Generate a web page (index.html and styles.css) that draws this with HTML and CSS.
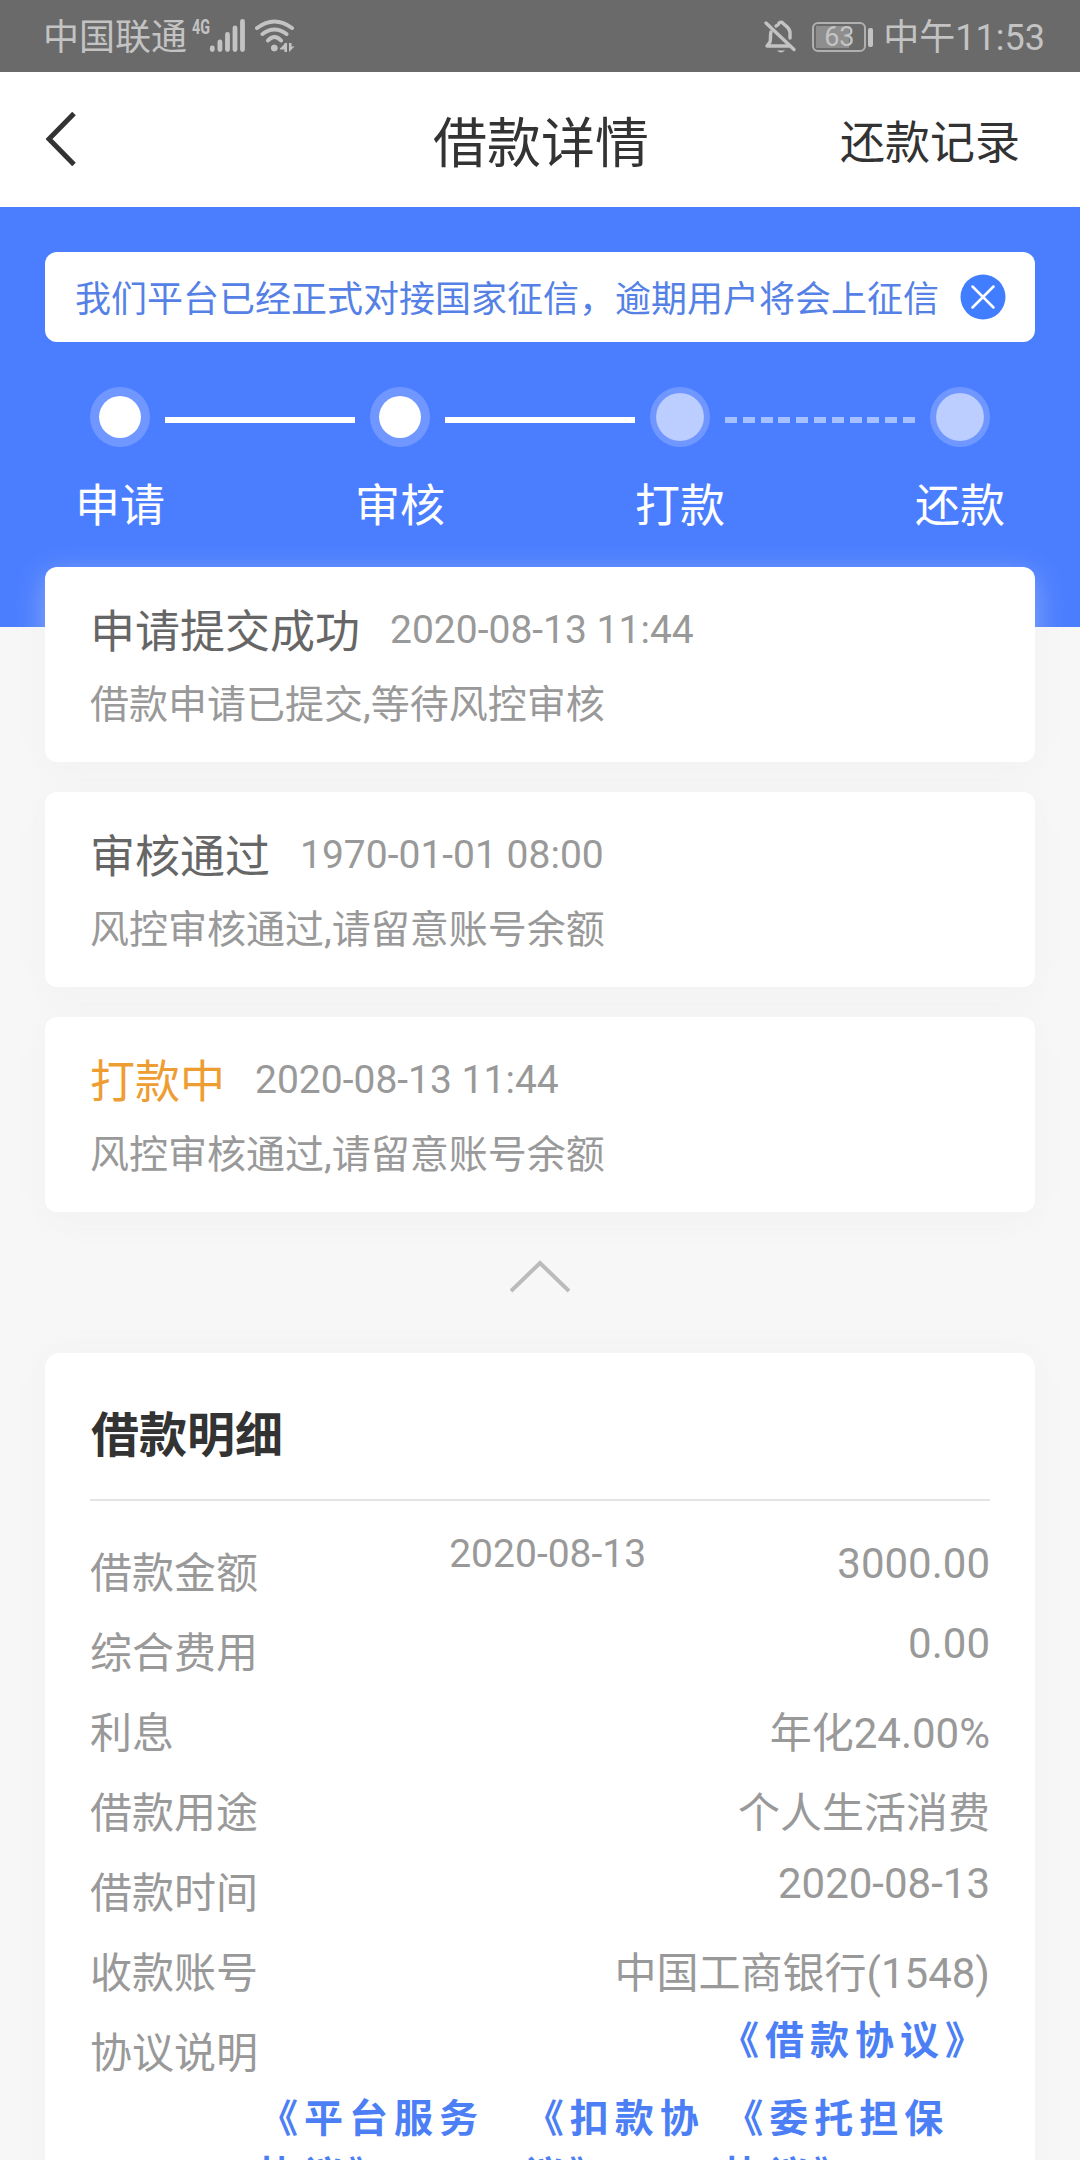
FILE: index.html
```html
<!DOCTYPE html>
<html lang="zh-CN">
<head>
    <meta charset="UTF-8">
    <meta name="viewport" content="width=device-width, initial-scale=1.0">
    <title>借款详情</title>
    <link rel="stylesheet" href="styles.css">
</head>
<body>
    <div class="status-bar">
        <span class="carrier">中国联通</span>
        <svg class="signal" width="106" height="40" viewBox="0 0 106 40">
            <text x="2" y="18" font-size="21" font-weight="700" textLength="18" lengthAdjust="spacingAndGlyphs">4G</text>
            <g stroke-width="4.8" stroke-linecap="round">
                <path d="M22.3 32v1.500M29.9 26v7.500M37.500 18.500v15M45 12v21.500M52.500 5.500v28"/>
            </g>
            <g fill="none" stroke-width="4" stroke-linecap="round">
                <path d="M67 12Q84.500 -1 102 12M72.500 18Q84.500 9 96.500 18M78 24.500Q84.500 17.500 91 24.500"/>
            </g>
            <circle cx="84.300" cy="32" r="3"/>
            <path d="M90 32.500l4.500-4.500v-1h2.500v9h-2.500v-2.500h-4.500zM99 27h2.500v3.500h3L99 36z" stroke="none"/>
        </svg>
        <div class="status-right">
            <svg class="bell" width="34" height="38" viewBox="0 0 34 38">
                <g fill="none" stroke-width="3.400" stroke-linecap="round" stroke-linejoin="round">
                    <path d="M3 6l28 26.500"/>
                    <path d="M8 15c-1 3 0 7-1 10l-3 4h22"/>
                    <path d="M13 9c2-1 3-1 3-3q2-1.500 4 0c0 2 6 3 7 9v6"/>
                </g>
                <path d="M14 33.500h8q-4 4-8 0z" stroke="none"/>
            </svg>
            <div class="battery"><span>63</span></div>
            <span class="time">中午11:53</span>
        </div>
    </div>

    <div class="nav">
        <a class="back" href="#">
            <svg width="30" height="54" viewBox="0 0 30 54"><path d="M28 1.500L3 27l25 25.500"/></svg>
        </a>
        <h1>借款详情</h1>
        <a class="record" href="#">还款记录</a>
    </div>

    <div class="banner">
        <div class="notice">
            <span>我们平台已经正式对接国家征信，逾期用户将会上征信</span>
            <svg width="46" height="46" viewBox="0 0 46 46">
                <circle cx="23" cy="23" r="22.500"/>
                <path d="M12.500 12.500l21 21M33.500 12.500l-21 21"/>
            </svg>
        </div>
        <div class="steps">
            <div class="step"><i class="dot"></i><span>申请</span></div>
            <div class="line"></div>
            <div class="step"><i class="dot"></i><span>审核</span></div>
            <div class="line"></div>
            <div class="step"><i class="dot wait"></i><span>打款</span></div>
            <div class="line dashed"></div>
            <div class="step"><i class="dot wait"></i><span>还款</span></div>
        </div>
    </div>

    <div class="records">
        <div class="record-card">
            <div class="record-title">申请提交成功<span class="date">2020-08-13 11:44</span></div>
            <div class="record-desc">借款申请已提交,等待风控审核</div>
        </div>
        <div class="record-card">
            <div class="record-title">审核通过<span class="date">1970-01-01 08:00</span></div>
            <div class="record-desc">风控审核通过,请留意账号余额</div>
        </div>
        <div class="record-card active">
            <div class="record-title">打款中<span class="date">2020-08-13 11:44</span></div>
            <div class="record-desc">风控审核通过,请留意账号余额</div>
        </div>
    </div>

    <div class="fold">
        <svg width="60" height="34" viewBox="0 0 60 34"><path d="M1 32L30 4l29 28"/></svg>
    </div>

    <div class="detail">
        <h2>借款明细</h2>
        <div class="row"><span>借款金额</span><span class="mid">2020-08-13</span><span class="num">3000.00</span></div>
        <div class="row"><span>综合费用</span><span class="num">0.00</span></div>
        <div class="row"><span>利息</span><span>年化24.00%</span></div>
        <div class="row"><span>借款用途</span><span>个人生活消费</span></div>
        <div class="row"><span>借款时间</span><span class="num">2020-08-13</span></div>
        <div class="row"><span>收款账号</span><span>中国工商银行(1548)</span></div>
        <div class="row agreement">
            <span>协议说明</span>
            <div class="links">
                <a href="#">《借款协议》</a>
                <div class="links-more">
                    <a href="#">《平台服务协议》</a>
                    <a href="#">《扣款协议》</a>
                    <a href="#">《委托担保协议》</a>
                </div>
            </div>
        </div>
    </div>
</body>
</html>
```
FILE: styles.css
```css
:root {
    --primary-color: #4b7eff;
    --status-color: #c3c3c3;
    --text-color: #333;
    --gray: #999;
}
* {
    box-sizing: border-box;
}
body {
    margin: 0;
    height: 2160px;
    overflow: hidden;
    font-family: Roboto, "Noto Sans CJK SC", sans-serif;
    background-color: #f7f7f7;
    color: var(--text-color);
    text-spacing-trim: space-all;
}
a {
    color: inherit;
    text-decoration: none;
}

/* status bar */
.status-bar {
    display: flex;
    align-items: center;
    height: 72px;
    padding: 0 35px 0 43px;
    background-color: #6a6a6a;
    color: var(--status-color);
    font-size: 36px;
    line-height: 72px;
}
.carrier, .time {
    padding-top: 4px;
}
.signal {
    margin-left: 3px;
    fill: var(--status-color);
    stroke: var(--status-color);
}
.signal text {
    stroke: none;
}
.status-right {
    display: flex;
    align-items: center;
    margin-left: auto;
}
.bell {
    fill: var(--status-color);
    stroke: var(--status-color);
}
.battery {
    position: relative;
    width: 54px;
    height: 30px;
    margin: 1px 17px 0 15px;
    border: 2px solid #b0b0b0;
    border-radius: 6px;
    background: linear-gradient(#8e8e8e, #8e8e8e) 2px 2px / 33px 22px no-repeat;
    font-size: 27px;
    line-height: 27px;
    text-align: center;
}
.battery::after {
    content: "";
    position: absolute;
    top: 4px;
    right: -9px;
    width: 5px;
    height: 19px;
    border-radius: 2px;
    background-color: var(--status-color);
}

/* nav */
.nav {
    display: grid;
    grid-template-columns: 1fr auto 1fr;
    align-items: center;
    height: 135px;
    padding: 0 60px 0 45px;
    background-color: #fff;
    line-height: 60px;
}
.back svg {
    display: block;
    margin: 0 0 1px 1px;
    fill: none;
    stroke: #333;
    stroke-width: 5;
}
.nav h1 {
    margin: 10px 0 0 17px;
    font-size: 54px;
    font-weight: 400;
}
.record {
    margin-top: 8px;
    font-size: 45px;
    text-align: right;
}

/* banner */
.banner {
    height: 420px;
    padding: 45px 45px 0;
    background-color: var(--primary-color);
}
.notice {
    display: flex;
    align-items: center;
    justify-content: space-between;
    height: 90px;
    padding: 0 29px 0 30px;
    border-radius: 12px;
    background-color: #fff;
    color: #5581e6;
    font-size: 36px;
    white-space: nowrap;
}
.notice svg {
    fill: #417dff;
    stroke: #fff;
}
.notice circle {
    stroke: none;
}
.notice path {
    stroke-width: 2.500;
    stroke-linecap: round;
}
.notice span {
    padding-bottom: 2px;
}
.steps {
    display: flex;
    align-items: flex-start;
    justify-content: space-between;
    padding: 45px 30px 0;
}
.step {
    display: flex;
    flex-direction: column;
    align-items: center;
    width: 90px;
    color: #fff;
    font-size: 45px;
    line-height: 60px;
}
.step span {
    margin-top: 30px;
}
.dot {
    width: 60px;
    height: 60px;
    border: 9px solid rgba(255, 255, 255, 0.2);
    border-radius: 50%;
    background-color: #fff;
    background-clip: padding-box;
}
.dot.wait {
    border-width: 6px;
    background-color: #bccdff;
}
.line {
    width: 190px;
    height: 6px;
    margin-top: 30px;
    background-color: #fff;
}
.line.dashed {
    background: repeating-linear-gradient(90deg, #a7c0ff 0 12px, transparent 12px 17.800px);
}

/* records */
.records {
    display: flex;
    flex-direction: column;
    gap: 30px;
    margin-top: -60px;
    padding: 0 45px;
}
.record-card {
    height: 195px;
    padding: 36px 45px;
    border-radius: 12px;
    background-color: #fff;
    box-shadow: 0 8px 30px rgba(236, 236, 236, 0.4);
    color: #666;
}
.record-title {
    font-size: 45px;
    line-height: 60px;
}
.date {
    margin-left: 30px;
    color: var(--gray);
    font-size: 39px;
    line-height: 1;
    vertical-align: 5px;
}
.record-desc {
    margin-top: 12px;
    color: var(--gray);
    font-size: 39px;
    line-height: 60px;
}
.active .record-title {
    color: #ee9d32;
}

.fold {
    display: flex;
    justify-content: center;
    height: 141px;
    padding-top: 47px;
}
.fold svg {
    fill: none;
    stroke: #bbb;
    stroke-width: 4;
}

/* detail */
.detail {
    height: 900px;
    margin: 0 45px;
    padding: 0 45px;
    border-radius: 15px;
    background-color: #fff;
    box-shadow: 0 0 30px rgba(236, 236, 236, 0.4);
}
.detail h2 {
    height: 148px;
    margin: 0 0 31px;
    padding-top: 53px;
    border-bottom: 2px solid #e4e4e4;
    font-size: 48px;
    line-height: 60px;
    text-indent: 1px;
}
.row {
    display: flex;
    justify-content: space-between;
    height: 80px;
    color: var(--gray);
    font-size: 42px;
    line-height: 84px;
}
.row .num {
    line-height: 64px;
}
.row .mid {
    font-size: 39px;
    line-height: 44px;
}
.links {
    width: 731px;
    padding-top: 1px;
    color: #4c7ff5;
    font-size: 39px;
    font-weight: 700;
    line-height: 57px;
    letter-spacing: 6px;
    text-align: right;
}
.links-more {
    display: flex;
    margin-top: 21px;
    text-align: left;
}
```
